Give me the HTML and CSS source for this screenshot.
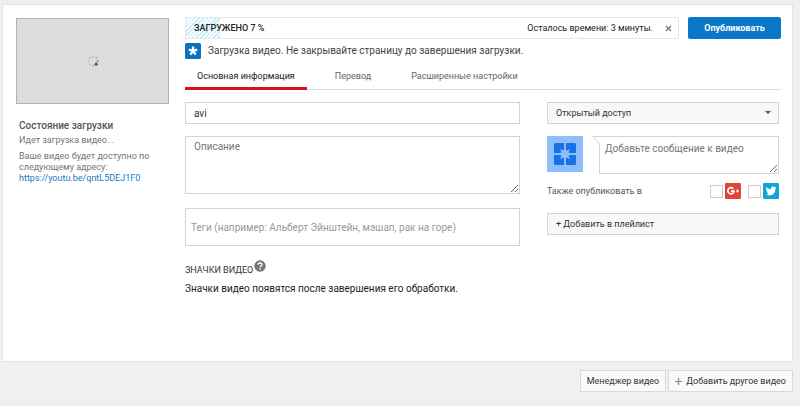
FILE: index.html
```
<!DOCTYPE html>
<html lang="ru">
<head>
    <meta charset="UTF-8">
    <title>Загрузка видео</title>
    <link rel="stylesheet" href="styles.css">
</head>
<body>
    <main class="card">
        <aside class="sidebar">
            <div class="thumb">
                <svg class="spinner" width="12" height="12" viewBox="0 0 12 12">
                    <circle cx="6" cy="1.4" r="1" fill="#b5b5b5"/>
                    <circle cx="9.3" cy="2.7" r="1" fill="#aaa"/>
                    <circle cx="10.6" cy="6" r="1.1" fill="#909090"/>
                    <circle cx="9.2" cy="9.2" r="1.6" fill="#555"/>
                    <circle cx="6" cy="10.6" r="1" fill="#aaa"/>
                    <circle cx="2.7" cy="9.3" r="1" fill="#bbb"/>
                    <circle cx="1.4" cy="6" r="1" fill="#bbb"/>
                    <circle cx="2.7" cy="2.7" r="1" fill="#bbb"/>
                </svg>
            </div>
            <div class="status">
                <h2>Состояние загрузки</h2>
                <p>Идет загрузка видео...</p>
                <p>Ваше видео будет доступно по следующему адресу:<br>
                <a href="https://youtu.be/qntL5DEJ1F0">https://youtu.be/qntL5DEJ1F0</a></p>
            </div>
        </aside>

        <section class="content">
            <div class="top-row">
                <div class="progress">
                    <div class="progress-fill" style="width: 7%"></div>
                    <span class="progress-label">ЗАГРУЖЕНО 7 %</span>
                    <span class="progress-time">Осталось времени: 3 минуты.</span>
                    <button class="close" type="button" aria-label="Отмена">
                        <svg width="7" height="7" viewBox="0 0 7 7"><path d="M1 1l5 5M6 1L1 6" stroke="#777" stroke-width="1.3"/></svg>
                    </button>
                </div>
                <button class="publish" type="button">Опубликовать</button>
            </div>

            <div class="notice">
                <svg width="16" height="16" viewBox="0 0 16 16">
                    <rect width="16" height="16" rx="1.5" fill="#0a72c0"/>
                    <path d="M8 8V3.500M8 8l4.200-1.400M8 8l2.600 3.500M8 8l-2.600 3.500M8 8L3.800 6.600" fill="none" stroke="#fff" stroke-width="2.300"/>
                </svg>
                <span>Загрузка видео. Не закрывайте страницу до завершения загрузки.</span>
            </div>

            <nav class="tabs">
                <a class="tab active" href="#basic">Основная информация</a>
                <a class="tab" href="#translation">Перевод</a>
                <a class="tab" href="#advanced">Расширенные настройки</a>
            </nav>

            <form class="form">
                <div class="fields">
                    <input class="field title" type="text" value="avi" aria-label="Название">
                    <textarea class="field description" placeholder="Описание" aria-label="Описание"></textarea>
                    <input class="field tags" type="text" placeholder="Теги (например: Альберт Эйнштейн, мэшап, рак на горе)" aria-label="Теги">
                    <div class="thumbs-title">
                        <h3>ЗНАЧКИ ВИДЕО</h3>
                        <svg width="12" height="12" viewBox="0 0 12 12">
                            <circle cx="6" cy="6" r="5.7" fill="#757575"/>
                            <path d="M4.1 4.8C4.1 2.3 8 2.4 8 4.6 8 6 6.1 6 6.1 7.4" fill="none" stroke="#fff" stroke-width="1.4"/>
                            <rect x="5.4" y="8.2" width="1.4" height="1.4" fill="#fff"/>
                        </svg>
                    </div>
                    <p class="thumbs-text">Значки видео появятся после завершения его обработки.</p>
                </div>

                <div class="options">
                    <div class="select-wrap">
                        <select class="privacy" aria-label="Доступ">
                            <option>Открытый доступ</option>
                        </select>
                    </div>
                    <div class="message-row">
                        <svg width="36" height="36" viewBox="0 0 36 36">
                            <rect width="36" height="36" fill="#8dbdfb"/>
                            <path d="M8 7h9v10H7V8zM19 7h9l1 1v9H19zM7 19h10v10H8l-1-1zM19 19h10v9l-1 1h-9z" fill="#1673e6"/>
                            <path d="M18 12l1.700 2.400 3.300-1.400-1.400 3.300L24 18l-2.400 1.700L23 23l-3.300-1.400L18 24l-1.700-2.400L13 23l1.400-3.300L12 18l2.400-1.700L13 13l3.300 1.400z" fill="#8dbdfb"/>
                        </svg>
                        <div class="bubble">
                            <textarea class="message" placeholder="Добавьте сообщение к видео" aria-label="Сообщение"></textarea>
                            <svg class="tail" width="8" height="8" viewBox="0 0 8 8">
                                <path d="M0 0h8v8z" fill="#fff"/>
                                <path d="M8 .5H.8l6.700 7.500" fill="none" stroke="#d3d3d3"/>
                            </svg>
                        </div>
                    </div>
                    <div class="share">
                        <span class="share-label">Также опубликовать в</span>
                        <label>
                            <input type="checkbox" aria-label="Google+">
                            <svg width="16" height="16" viewBox="0 0 16 16">
                                <rect width="16" height="16" rx="1" fill="#e0433a"/>
                                <path d="M8.300 5.700A3.100 3.100 0 1 0 9 8.200H6" fill="none" stroke="#fff" stroke-width="1.700"/>
                                <path d="M12.500 6.500v3M11 8h3" stroke="#fff" stroke-width="1.200"/>
                            </svg>
                        </label>
                        <label>
                            <input type="checkbox" aria-label="Twitter">
                            <svg width="16" height="16" viewBox="0 0 16 16">
                                <rect width="16" height="16" rx="1" fill="#12a5d4"/>
                                <path d="M13.500 4.600c-.4.200-.8.300-1.300.4.500-.3.800-.7 1-1.200-.4.200-.9.400-1.400.5a2.200 2.200 0 0 0-3.800 2C6.100 6.200 4.500 5.300 3.400 4c-.6 1-.3 2.300.7 3-.4 0-.7-.1-1-.3 0 1.100.8 2 1.800 2.200-.3.100-.7.100-1 0 .3.900 1.100 1.500 2.100 1.500-.9.700-2.100 1-3.200.9 4.300 2.700 9.600.2 9.600-5.600.4-.3.800-.7 1.100-1.100z" fill="#fff"/>
                            </svg>
                        </label>
                    </div>
                    <button class="playlist" type="button">+ Добавить в плейлист</button>
                </div>
            </form>
        </section>
    </main>

    <footer class="footer">
        <button class="footer-btn" type="button">Менеджер видео</button>
        <button class="footer-btn" type="button">
            <svg width="7" height="7" viewBox="0 0 7 7"><path d="M3.500 0v7M0 3.500h7" stroke="#888" stroke-width="1.200"/></svg>
            Добавить другое видео
        </button>
    </footer>
</body>
</html>
```
FILE: styles.css
```
* { box-sizing: border-box; }
body {
    margin: 0;
    padding: 4px 7px 14px 2px;
    min-height: 100vh;
    background: #f0f0f0;
    color: #333;
    font: 9px/12px Roboto, "Liberation Sans", sans-serif;
}
h2, h3, p { margin: 0; }
svg { display: block; flex: none; }
button, input, textarea, select {
    margin: 0;
    font: inherit;
    color: inherit;
    border-radius: 0;
}
a { color: #167ac6; text-decoration: none; }

.card {
    display: flex;
    gap: 16px;
    min-height: 358px;
    padding: 12px 11px 12px 13px;
    background: #fff;
    border: 1px solid #e2e2e2;
}

/* left column */
.sidebar { flex: 0 0 153px; }
.thumb {
    display: flex;
    align-items: center;
    justify-content: center;
    height: 86px;
    margin-top: 1px;
    background: #ddd;
    border: 1px solid #b3b3b3;
}
.status { padding: 16px 16px 0 3px; color: #767676; }
.status h2 {
    font-size: 10px;
    font-weight: 500;
    line-height: 12px;
    color: #555;
}
.status p { margin-top: 3px; line-height: 11px; }
.status p + p { margin-top: 5px; }

/* main column */
.content { flex: 1; min-width: 0; }
.top-row { display: flex; gap: 9px; }
.progress {
    position: relative;
    flex: 1;
    display: flex;
    align-items: center;
    height: 22px;
    padding: 0 6px 0 8px;
    border: 1px solid #e2e8ea;
    color: #222;
}
.progress-fill {
    position: absolute;
    left: 0;
    top: 0;
    bottom: 0;
    background: repeating-linear-gradient(135deg, #c2e9f8 0 1px, #f8fdff 1px 3px);
}
.progress-label { position: relative; font-weight: 500; }
.progress-time { margin-left: auto; }
.close { margin-left: 12px; padding: 0; border: 0; background: none; }
.publish {
    width: 93px;
    padding: 0;
    background: #0a78c8;
    border: 0;
    border-radius: 2px;
    color: #fff;
    font-weight: 700;
}
.notice {
    display: flex;
    align-items: center;
    gap: 7px;
    margin-top: 4px;
    font-size: 10px;
    line-height: 16px;
    color: #444;
}
.tabs {
    display: flex;
    gap: 16px;
    margin-top: 4px;
    border-bottom: 1px solid #ddd;
}
.tab {
    padding: 7px 12px 5px;
    margin-bottom: -1px;
    border-bottom: 3px solid transparent;
    color: #666;
}
.tab.active { border-color: #d8121b; color: #222; }

.form { display: flex; gap: 27px; padding: 12px 2px 0 0; }
.fields { flex: 1; min-width: 0; }
.options { flex: 0 0 232px; }

.field {
    display: block;
    width: 100%;
    padding: 0 8px;
    background: #fff;
    border: 1px solid #d3d3d3;
    font-size: 10px;
}
.field::placeholder, .message::placeholder { color: #767676; }
.title { height: 22px; }
.description { height: 58px; margin-top: 12px; padding-top: 4px; resize: vertical; }
.tags { height: 38px; margin-top: 14px; padding: 0 5px; }
.tags::placeholder { color: #999; }
.thumbs-title { display: flex; gap: 1px; margin-top: 14px; }
.thumbs-title h3 { padding-top: 4px; font-size: 9px; font-weight: 400; line-height: 12px; }
.thumbs-text { margin-top: 6px; font-size: 10px; line-height: 14px; color: #222; }

.select-wrap { position: relative; }
.select-wrap::after {
    content: "";
    position: absolute;
    right: 8px;
    top: 9px;
    border: 3px solid transparent;
    border-top-color: #555;
    border-bottom: 0;
}
.privacy, .playlist {
    display: block;
    width: 100%;
    height: 22px;
    padding: 0 8px;
    background: #f8f8f8;
    border: 1px solid #d3d3d3;
    text-align: left;
    appearance: none;
}
.message-row { display: flex; gap: 16px; margin-top: 12px; }
.bubble { position: relative; flex: 1; }
.message {
    display: block;
    width: 100%;
    height: 38px;
    padding: 6px 5px;
    border: 1px solid #d3d3d3;
    font-size: 10px;
    resize: vertical;
}
.tail { position: absolute; left: -7px; top: 0; }
.share {
    display: flex;
    align-items: center;
    gap: 7px;
    margin-top: 9px;
    color: #555;
}
.share-label { margin-right: auto; }
.share label { display: flex; align-items: center; gap: 2px; }
.share input {
    width: 13px;
    height: 13px;
    appearance: none;
    background: #fff;
    border: 1px solid #ccc;
}
.playlist { margin-top: 14px; }

.footer { display: flex; justify-content: flex-end; gap: 2px; margin-top: 8px; }
.footer-btn {
    display: flex;
    align-items: center;
    gap: 4px;
    height: 22px;
    padding: 0 6px;
    background: #fafafa;
    border: 1px solid #d8d8d8;
}
```
